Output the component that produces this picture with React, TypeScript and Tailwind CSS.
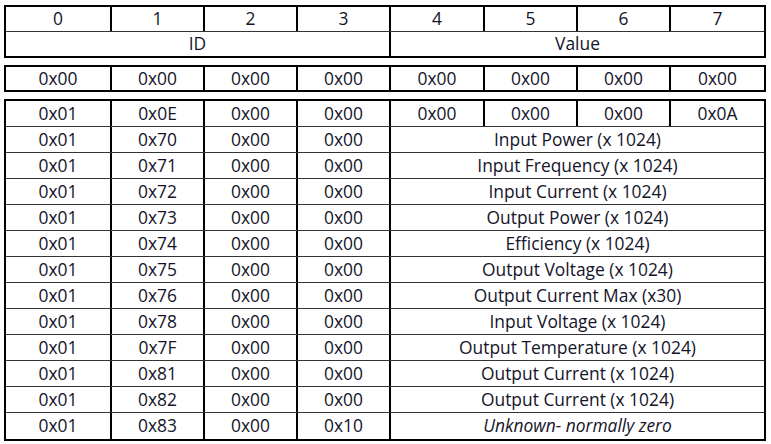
const cols = [
  "w-[106px]",
  "w-[93px]",
  "w-[93px]",
  "w-[93px]",
  "w-[94px]",
  "w-[93px]",
  "w-[93px]",
  "w-[93px]",
];

type Row = { cells: string[]; label?: string; italic?: boolean };

const rows: Row[] = [
  { cells: ["0x01", "0x0E", "0x00", "0x00", "0x00", "0x00", "0x00", "0x0A"] },
  { cells: ["0x01", "0x70", "0x00", "0x00"], label: "Input Power (x 1024)" },
  { cells: ["0x01", "0x71", "0x00", "0x00"], label: "Input Frequency (x 1024)" },
  { cells: ["0x01", "0x72", "0x00", "0x00"], label: "Input Current (x 1024)" },
  { cells: ["0x01", "0x73", "0x00", "0x00"], label: "Output Power (x 1024)" },
  { cells: ["0x01", "0x74", "0x00", "0x00"], label: "Efficiency (x 1024)" },
  { cells: ["0x01", "0x75", "0x00", "0x00"], label: "Output Voltage (x 1024)" },
  { cells: ["0x01", "0x76", "0x00", "0x00"], label: "Output Current Max (x30)" },
  { cells: ["0x01", "0x78", "0x00", "0x00"], label: "Input Voltage (x 1024)" },
  { cells: ["0x01", "0x7F", "0x00", "0x00"], label: "Output Temperature (x 1024)" },
  { cells: ["0x01", "0x81", "0x00", "0x00"], label: "Output Current (x 1024)" },
  { cells: ["0x01", "0x82", "0x00", "0x00"], label: "Output Current (x 1024)" },
  { cells: ["0x01", "0x83", "0x00", "0x10"], label: "Unknown- normally zero", italic: true },
];

function Cells({ cells }: { cells: string[] }) {
  return (
    <>
      {cells.map((c, i) => (
        <div
          key={i}
          className={`${cols[i]} flex items-center justify-center ${
            i < 7 ? "border-r-2 border-black" : ""
          }`}
        >
          {c}
        </div>
      ))}
    </>
  );
}

function TableRow({ row, last }: { row: Row; last?: boolean }) {
  return (
    <div className={`flex h-[26px] ${last ? "" : "border-b border-[#333]"}`}>
      <Cells cells={row.cells} />
      {row.label && (
        <div
          className={`flex-1 flex items-center justify-center ${row.italic ? "italic" : ""}`}
        >
          {row.label}
        </div>
      )}
    </div>
  );
}

export default function App() {
  return (
    <div
      className="w-[771px] h-[444px] bg-white pt-[5px] pl-[4px] text-[17.4px] leading-none text-[#14142a]"
      style={{ fontFamily: "'Open Sans', 'Liberation Sans', sans-serif" }}
    >
      <div className="w-[762px] flex flex-col gap-[7px]">
        <div className="border-2 border-black">
          <div className="flex h-[25px] border-b border-[#333]">
            <Cells cells={["0", "1", "2", "3", "4", "5", "6", "7"]} />
          </div>
          <div className="flex h-[24px]">
            <div className="w-[385px] border-r-2 border-black flex items-center justify-center">
              ID
            </div>
            <div className="flex-1 flex items-center justify-center">Value</div>
          </div>
        </div>
        <div className="border-2 border-black">
          <div className="flex h-[23px]">
            <Cells cells={["0x00", "0x00", "0x00", "0x00", "0x00", "0x00", "0x00", "0x00"]} />
          </div>
        </div>
        <div className="border-2 border-black">
          {rows.map((r, i) => (
            <TableRow key={i} row={r} last={i === rows.length - 1} />
          ))}
        </div>
      </div>
    </div>
  );
}
